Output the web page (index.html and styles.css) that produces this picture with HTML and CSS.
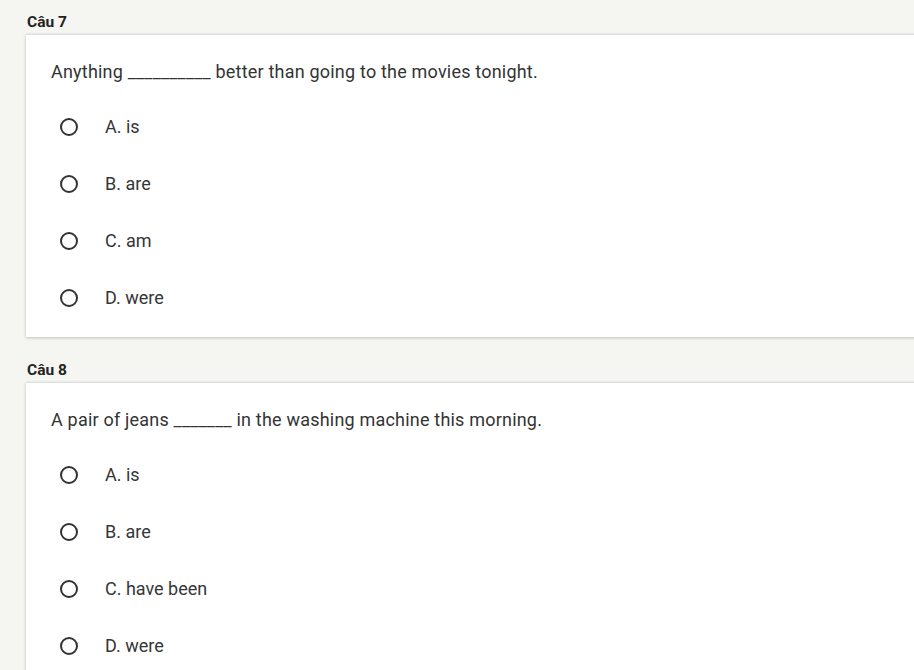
FILE: index.html
```html
<!DOCTYPE html>
<html lang="vi">
<head>
<meta charset="utf-8">
<title>Quiz</title>
<link rel="stylesheet" href="styles.css">
</head>
<body>
<main class="page">
  <section class="question">
    <h2 class="label">Câu 7</h2>
    <div class="card">
      <p class="prompt">Anything __________ better than going to the movies tonight.</p>
      <ul class="options">
        <li class="option"><span class="radio"></span><span class="text">A. is</span></li>
        <li class="option"><span class="radio"></span><span class="text">B. are</span></li>
        <li class="option"><span class="radio"></span><span class="text">C. am</span></li>
        <li class="option"><span class="radio"></span><span class="text">D. were</span></li>
      </ul>
    </div>
  </section>
  <section class="question">
    <h2 class="label">Câu 8</h2>
    <div class="card">
      <p class="prompt">A pair of jeans _______ in the washing machine this morning.</p>
      <ul class="options">
        <li class="option"><span class="radio"></span><span class="text">A. is</span></li>
        <li class="option"><span class="radio"></span><span class="text">B. are</span></li>
        <li class="option"><span class="radio"></span><span class="text">C. have been</span></li>
        <li class="option"><span class="radio"></span><span class="text">D. were</span></li>
      </ul>
    </div>
  </section>
</main>
</body>
</html>
```
FILE: styles.css
```css
html, body {
  margin: 0;
  padding: 0;
  overflow: hidden;
  background: #f5f5f1;
}
body {
  font-family: Roboto, "Liberation Sans", sans-serif;
  color: #333;
}
.page {
  padding: 12px 0 0 26px;
}
.question {
  margin-bottom: 23px;
}
.label {
  margin: 0 0 1px 1px;
  font-size: 15.5px;
  line-height: 21px;
  font-weight: 700;
  color: #222;
}
.card {
  background: #fff;
  width: 940px;
  box-shadow: 0 1px 3px rgba(0,0,0,0.22);
  border-top: 1px solid #ddd;
  padding: 25px 0 11px 25px;
  box-sizing: border-box;
}
.prompt {
  margin: 0 0 14px;
  font-size: 18px;
  letter-spacing: 0.2px;
  line-height: 24px;
}
.options {
  list-style: none;
  margin: 0;
  padding: 0;
}
.option {
  display: flex;
  align-items: center;
  height: 57px;
  font-size: 18px;
}
.radio {
  width: 14px;
  height: 14px;
  border: 2px solid #333;
  border-radius: 50%;
  margin-left: 9px;
  margin-right: 27px;
}
.text {
  color: #363636;
}
```
